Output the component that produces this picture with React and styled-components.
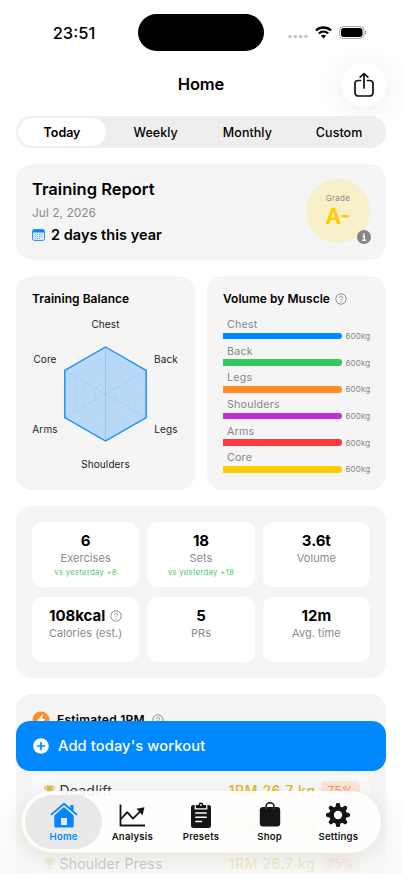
import React from 'react';
import styled, { createGlobalStyle } from 'styled-components';

const GlobalStyle = createGlobalStyle`
  * {
    box-sizing: border-box;
  }

  body {
    margin: 0;
    background: #fff;
    color: #000;
    font-family: Inter, "Liberation Sans", sans-serif;
  }
`;

const Screen = styled.div`
  position: relative;
  width: 402px;
  height: 874px;
  overflow: hidden;
  background: #fff;
`;

const StatusBar = styled.div`
  display: grid;
  grid-template-columns: 138px 126px 138px;
  align-items: center;
  height: 37px;
  margin-top: 14px;
`;

const Clock = styled.div`
  padding-left: 10px;
  text-align: center;
  font-size: 16.5px;
  font-weight: 550;
`;

const Island = styled.div`
  height: 37px;
  border-radius: 19px;
  background: #000;
`;

const StatusIcons = styled.div`
  display: flex;
  align-items: center;
  gap: 7px;
  padding-left: 24px;
`;

const NavBar = styled.div`
  display: grid;
  grid-template-columns: 1fr auto 1fr;
  align-items: center;
  height: 44px;
  margin-top: 11.5px;
  padding: 0 16px;
`;

const NavTitle = styled.h1`
  grid-column: 2;
  margin: 0;
  padding-bottom: 1px;
  font-size: 16.5px;
  font-weight: 600;
  letter-spacing: -0.1px;
`;

const ShareButton = styled.button`
  display: flex;
  align-items: center;
  justify-content: center;
  justify-self: end;
  width: 44px;
  height: 44px;
  padding: 0;
  border: 0;
  border-radius: 50%;
  background: #fff;
  box-shadow: 0 3px 30px rgba(0, 0, 0, 0.08);
`;

const Content = styled.main`
  display: flex;
  flex-direction: column;
  gap: 16px;
  padding: 9.5px 16px 0;
`;

const Segments = styled.div`
  display: grid;
  grid-template-columns: repeat(4, 1fr);
  height: 32px;
  padding: 2px 1px 2px 2px;
  border-radius: 16px;
  background: #eee;
`;

const Segment = styled.div`
  display: flex;
  align-items: center;
  justify-content: center;
  width: ${({ $active }) => ($active ? '88px' : 'auto')};
  border-radius: 14px;
  background: ${({ $active }) => ($active ? '#fff' : 'transparent')};
  font-size: 12.5px;
  font-weight: ${({ $active }) => ($active ? 600 : 500)};
  letter-spacing: ${({ $active }) => ($active ? '-0.05px' : '0.05px')};
`;

const Card = styled.section`
  height: ${({ $height }) => $height}px;
  padding: 16px;
  border-radius: 16px;
  background: #f5f5f5;
`;

const ReportCard = styled(Card)`
  display: flex;
  justify-content: space-between;
  padding-top: 15px;
`;

const ReportTitle = styled.h2`
  margin: 0;
  font-size: 16.5px;
  font-weight: 600;
  line-height: 20px;
`;

const ReportDate = styled.div`
  margin-top: 6px;
  color: #8a8a8e;
  font-size: 12px;
  line-height: 16px;
`;

const Streak = styled.div`
  display: flex;
  align-items: center;
  gap: 6px;
  margin-top: 4px;
  font-size: 14.5px;
  font-weight: 600;
  line-height: 19px;
  letter-spacing: 0.02px;
`;

const Grade = styled.div`
  position: relative;
  display: flex;
  flex-direction: column;
  align-items: center;
  width: 64px;
  height: 64px;
  padding-top: 14px;
  border-radius: 50%;
  background: #f8f0c9;
`;

const GradeLabel = styled.div`
  color: #8a8a80;
  font-size: 8px;
  line-height: 10px;
  letter-spacing: 0.3px;
`;

const GradeValue = styled.div`
  color: #fc0;
  font-size: 21px;
  font-weight: 700;
  line-height: 27px;
`;

const InfoBadge = styled.svg`
  position: absolute;
  right: -0.5px;
  bottom: -1px;
`;

const ChartRow = styled.div`
  display: grid;
  grid-template-columns: repeat(2, minmax(0, 1fr));
  gap: 12px;
`;

const CardTitle = styled.h3`
  display: flex;
  align-items: center;
  gap: 5px;
  margin: 0;
  font-size: 12px;
  font-weight: 600;
  line-height: 14px;
  letter-spacing: 0.04px;
  white-space: nowrap;
`;

const RadarChart = styled.svg`
  display: block;
  margin: 10px auto 0;

  text {
    fill: #222;
    font-size: 10px;
    letter-spacing: 0.1px;
    text-anchor: middle;
  }
`;

const MuscleList = styled.div`
  margin-top: 12px;
`;

const Muscle = styled.div`
  height: 26.65px;
`;

const MuscleName = styled.div`
  padding-left: 4px;
  color: #868686;
  font-size: 10.7px;
  line-height: 14.6px;
  letter-spacing: 0.2px;
`;

const MuscleBar = styled.div`
  display: flex;
  align-items: center;
  gap: 4px;
  height: 7px;
  color: #868686;
  font-size: 8px;
  letter-spacing: 0.15px;

  &::before {
    content: '';
    flex: none;
    width: 118.5px;
    height: 6.5px;
    border-radius: 0 3px 3px 0;
    background: ${({ $color }) => $color};
  }
`;

const StatsCard = styled(Card)`
  display: grid;
  grid-template-columns: repeat(3, minmax(0, 1fr));
  grid-auto-rows: 65px;
  gap: 10px 8px;
`;

const Tile = styled.div`
  display: flex;
  flex-direction: column;
  align-items: center;
  padding-top: 10px;
  border-radius: 10px;
  background: #fff;
`;

const TileValue = styled.div`
  display: flex;
  align-items: center;
  gap: 5px;
  font-size: 15px;
  font-weight: 700;
  line-height: 18px;
  letter-spacing: -0.05px;
`;

const TileLabel = styled.div`
  color: #8a8a8e;
  font-size: 11px;
  line-height: 17px;
  letter-spacing: 0.05px;
`;

const TileChange = styled.div`
  color: #48c969;
  font-size: 7.6px;
  line-height: 11px;
  letter-spacing: 0.35px;
`;

const RecordTitle = styled(CardTitle)`
  height: 18px;
  padding-top: 1px;
  gap: 7px;
  letter-spacing: 0.25px;
`;

const RecordList = styled.div`
  margin-top: 47px;
`;

const RecordRow = styled.div`
  display: grid;
  grid-template-columns: 10px 1fr auto 39px;
  align-items: center;
  gap: 5.5px;
  height: 31px;
  margin-bottom: 5.5px;
  padding: 0 10px 0 12px;
  border-radius: 8px;
  background: #fafafa;
  color: #222;
  font-size: 14px;
  letter-spacing: 0.2px;
`;

const RecordWeight = styled.span`
  color: #e3b112;
  font-weight: 550;
  letter-spacing: 0.6px;
`;

const Percent = styled.span`
  padding: 2px 0;
  border-radius: 5px;
  background: #fce5d7;
  color: #ef8d53;
  font-size: 12px;
  line-height: 15px;
  text-align: center;
`;

const BottomFade = styled.div`
  position: absolute;
  left: 0;
  right: 0;
  bottom: 0;
  height: 104px;
  background: linear-gradient(rgba(255, 255, 255, 0) 0%, rgba(253, 253, 253, 0.15) 25%, rgba(248, 248, 247, 0.78) 85%);
`;

const AddButton = styled.button`
  position: absolute;
  left: 16px;
  right: 16px;
  top: 721px;
  display: flex;
  align-items: center;
  gap: 9px;
  height: 50px;
  padding: 0 17px;
  border: 0;
  border-radius: 14px;
  background: #0088ff;
  color: #fff;
  font-family: inherit;
  font-size: 14.6px;
  font-weight: 550;
  letter-spacing: 0.15px;
`;

const TabBar = styled.nav`
  position: absolute;
  left: 21px;
  right: 21px;
  bottom: 21px;
  display: grid;
  grid-template-columns: repeat(5, 68.7px);
  justify-content: center;
  height: 62px;
  padding: 4px;
  border-radius: 31px;
  background: rgba(254, 254, 253, 0.92);
  box-shadow: inset 1px -1px 1px rgba(247, 244, 190, 0.6), 0 3px 22px rgba(0, 0, 0, 0.1);
`;

const Tab = styled.div`
  display: flex;
  flex-direction: column;
  align-items: center;
  margin: 0 -4px;
  padding-top: 7px;
  border-radius: 27px;
  background: ${({ $active }) => ($active ? '#e9e9e9' : 'transparent')};
  color: ${({ $active }) => ($active ? '#0088ff' : '#151515')};
  font-size: 9.6px;
  font-weight: 600;
  line-height: 12px;
  letter-spacing: 0.2px;

  svg {
    margin-bottom: 3px;
  }
`;

const SignalIcon = () => (
  <svg width="20" height="13" viewBox="0 0 20 13" fill="#c4c4c4">
    {[2, 7.3, 12.7, 18].map((x) => <circle key={x} cx={x} cy="10.5" r="1.8" />)}
  </svg>
);

const WifiIcon = () => (
  <svg width="17" height="13" viewBox="0 0 17 13" fill="none" stroke="#000" strokeWidth="2.3">
    <path d="M1 4.500c4.200-4 10.800-4 15 0" />
    <path d="M3.800 7.500c2.700-2.500 6.700-2.500 9.400 0" />
    <path d="M5.900 9.600c1.500-1.300 3.700-1.300 5.200 0L8.500 12.400z" fill="#000" stroke="none" />
  </svg>
);

const BatteryIcon = () => (
  <svg width="28" height="13" viewBox="0 0 28 13">
    <rect x=".5" y=".5" width="24.5" height="12" rx="4" fill="none" stroke="#a5a5a5" />
    <rect x="2" y="2" width="21.5" height="9" rx="2.700" />
    <path d="M26 4.500c1.800.7 1.800 3.300 0 4z" fill="#a5a5a5" />
  </svg>
);

const ShareIcon = () => (
  <svg width="22" height="26" viewBox="0 0 22 26" fill="none" stroke="#111" strokeWidth="1.700" strokeLinecap="round" strokeLinejoin="round">
    <path d="M7.500 8.500H5A3 3 0 0 0 2 11.500v9.200a3.300 3.300 0 0 0 3.300 3.300h11.400a3.300 3.300 0 0 0 3.300-3.300v-9.200a3 3 0 0 0-3-3h-2.500" />
    <path d="M11 16V1.500M7.200 5.200 11 1.500l3.800 3.700" />
  </svg>
);

const CalendarIcon = () => (
  <svg width="13" height="12" viewBox="0 0 13 12">
    <rect x=".5" y=".5" width="12" height="11" rx="2" fill="#d9ecff" stroke="#2693ff" />
    <path d="M.5 3.500v-1a2 2 0 0 1 2-2h8a2 2 0 0 1 2 2v1z" fill="#0a84ff" />
    <path d="M3 5.500h7M3 7.500h7M3 9.500h5" stroke="#72b8ff" strokeDasharray="1.200 .8" />
  </svg>
);

const HelpIcon = () => (
  <svg width="12" height="12" viewBox="0 0 12 12" fill="none" stroke="#858585" strokeWidth=".9">
    <circle cx="6" cy="6" r="5.200" />
    <path d="M4.500 4.900c0-2.300 3.200-2.200 3.100-.3C7.600 5.700 6 5.800 6 7.100M6 8.200v1" />
  </svg>
);

const BoltIcon = () => (
  <svg width="18" height="18" viewBox="0 0 18 18">
    <circle cx="9" cy="9" r="8.500" fill="#ff8d28" />
    <path d="M11.200 3 4.800 9.700h3.600L7 15l6.300-7H9.700z" fill="#fff" />
  </svg>
);

const PlusIcon = () => (
  <svg width="16" height="16" viewBox="0 0 16 16">
    <circle cx="8" cy="8" r="7.800" fill="#fff" />
    <path d="M8 4.500v7M4.500 8h7" stroke="#0088ff" strokeWidth="1.700" strokeLinecap="round" />
  </svg>
);

const TrophyIcon = () => (
  <svg width="11" height="12" viewBox="0 0 11 12" fill="#dcb63e">
    <path d="M2.500.5h6v3c0 2-1 3.500-2.300 4v2.200h2V11H2.800V9.700h2V7.500C3.500 7 2.500 5.500 2.500 3.500z" />
    <path d="M2.500 1.800H.6c0 2 .8 3.200 2.400 3.200M8.500 1.800h1.900c0 2-.8 3.200-2.400 3.200" fill="none" stroke="#dcb63e" />
  </svg>
);

const HomeIcon = () => (
  <svg width="28" height="26" viewBox="0 0 28 26" fill="currentColor">
    <path d="M1.500 12.400 14 1.700l12.500 10.700" fill="none" stroke="currentColor" strokeWidth="1.900" strokeLinecap="round" />
    <path d="M20.300 3h3.200v7.200l-3.200-2.700z" />
    <path d="M4.300 13.400 14 5.100l9.700 8.300V24a1.600 1.600 0 0 1-1.600 1.600H5.900A1.600 1.600 0 0 1 4.300 24z" />
    <path d="M11 16h6v7h-6z" fill="#e9e9e9" />
  </svg>
);

const AnalysisIcon = () => (
  <svg width="26" height="26" viewBox="0 0 26 26" fill="none" stroke="currentColor" strokeWidth="1.800">
    <path d="M1.500 2.500v21H26" />
    <path d="M2 17 8.200 10.200l5.800 6.500 8-8" strokeLinejoin="round" />
    <path d="m17.500 6.700 8-1.500-2 8z" fill="currentColor" stroke="none" />
  </svg>
);

const PresetsIcon = () => (
  <svg width="22" height="26" viewBox="0 0 22 26" fill="currentColor">
    <path d="M3.500 3h15A2.500 2.500 0 0 1 21 5.500v18a2.500 2.500 0 0 1-2.500 2.500h-15A2.500 2.500 0 0 1 1 23.500v-18A2.500 2.500 0 0 1 3.500 3z" />
    <path d="M5.200 2.500v4.300h11.600V2.500" fill="none" stroke="#fff" strokeWidth="1.200" />
    <path d="M6.300 5.800V4.200q0-1.200 1.700-1.200h.6a2.400 2.400 0 0 1 4.800 0h.6q1.700 0 1.700 1.200v1.600z" />
    <circle cx="11" cy="2.900" r=".9" fill="#fff" />
    <path d="M5.800 11h10.400M5.800 15.300h10.400M5.800 19.600h5.700" stroke="#fff" strokeWidth="1.500" strokeLinecap="round" />
  </svg>
);

const ShopIcon = () => (
  <svg width="22" height="26" viewBox="0 0 22 26" fill="currentColor">
    <rect x=".8" y="5" width="20.400" height="19.500" rx="3.200" />
    <path d="M7 7V4.700a4 4 0 0 1 8 0V7" fill="none" stroke="currentColor" strokeWidth="1.600" />
    <path d="M7 5v2.500M15 5v2.500" stroke="#777" strokeWidth=".7" />
  </svg>
);

const SettingsIcon = () => (
  <svg width="26" height="26" viewBox="0 0 26 26" fill="currentColor">
    {[0, 45, 90, 135, 180, 225, 270, 315].map((angle) => (
      <path key={angle} d="M10.300 6 11 2.200q.2-1.200 1.200-1.200h1.600q1 0 1.200 1.200l.7 3.800z" transform={`rotate(${angle} 13 13)`} />
    ))}
    <circle cx="13" cy="13" r="6.500" fill="none" stroke="currentColor" strokeWidth="4.600" />
  </svg>
);

const MUSCLES = [
  { name: 'Chest', color: '#0088ff' },
  { name: 'Back', color: '#34c759' },
  { name: 'Legs', color: '#ff8d28' },
  { name: 'Shoulders', color: '#c32fdb' },
  { name: 'Arms', color: '#ff383c' },
  { name: 'Core', color: '#ffcc00' },
];

const STATS = [
  { value: '6', label: 'Exercises', change: 'vs yesterday +6' },
  { value: '18', label: 'Sets', change: 'vs yesterday +18' },
  { value: '3.6t', label: 'Volume' },
  { value: '108kcal', label: 'Calories (est.)', help: true },
  { value: '5', label: 'PRs' },
  { value: '12m', label: 'Avg. time' },
];

const RECORDS = ['Deadlift', '', 'Shoulder Press'];

const TABS = [
  { name: 'Home', Icon: HomeIcon },
  { name: 'Analysis', Icon: AnalysisIcon },
  { name: 'Presets', Icon: PresetsIcon },
  { name: 'Shop', Icon: ShopIcon },
  { name: 'Settings', Icon: SettingsIcon },
];

const hexagon = (r) => [0, 60, 120, 180, 240, 300]
  .map((deg) => {
    const a = (deg * Math.PI) / 180;
    return `${73.5 + r * Math.sin(a)},${78 - r * Math.cos(a)}`;
  })
  .join(' ');

const Radar = () => (
  <RadarChart width="147" height="156" viewBox="0 0 147 156">
    <g fill="none" stroke="#c9cdd2" strokeWidth=".7">
      {[12, 24, 35].map((r) => <polygon key={r} points={hexagon(r)} strokeOpacity=".4" strokeDasharray="3 2" />)}
      <path d="M73.500 31v94" />
      <path d="M32.800 54.500l81.400 47M114.200 54.500l-81.400 47" strokeOpacity=".6" />
    </g>
    <polygon points={hexagon(47)} fill="#0088ff" fillOpacity=".25" stroke="#168cf7" strokeWidth="1.400" />
    <text x="73.500" y="12.300">Chest</text>
    <text x="134" y="47.300">Back</text>
    <text x="134" y="116.700">Legs</text>
    <text x="73.500" y="151.600">Shoulders</text>
    <text x="13" y="116.700">Arms</text>
    <text x="13" y="47.300">Core</text>
  </RadarChart>
);

const App = () => (
  <Screen>
    <GlobalStyle />
    <StatusBar>
      <Clock>23:51</Clock>
      <Island />
      <StatusIcons>
        <SignalIcon />
        <WifiIcon />
        <BatteryIcon />
      </StatusIcons>
    </StatusBar>
    <NavBar>
      <NavTitle>Home</NavTitle>
      <ShareButton aria-label="Share"><ShareIcon /></ShareButton>
    </NavBar>
    <Content>
      <Segments>
        {['Today', 'Weekly', 'Monthly', 'Custom'].map((name) => (
          <Segment key={name} $active={name === 'Today'}>{name}</Segment>
        ))}
      </Segments>
      <ReportCard $height={96}>
        <div>
          <ReportTitle>Training Report</ReportTitle>
          <ReportDate>Jul 2, 2026</ReportDate>
          <Streak><CalendarIcon />2 days this year</Streak>
        </div>
        <Grade>
          <GradeLabel>Grade</GradeLabel>
          <GradeValue>A-</GradeValue>
          <InfoBadge width="14" height="14" viewBox="0 0 14 14">
            <circle cx="7" cy="7" r="7" fill="#868686" />
            <path d="M5.500 6h1.800v4.200M5.300 10.300h3.800M7 3v1.600" stroke="#fff" strokeWidth="1.400" fill="none" />
          </InfoBadge>
        </Grade>
      </ReportCard>
      <ChartRow>
        <Card $height={214}>
          <CardTitle>Training Balance</CardTitle>
          <Radar />
        </Card>
        <Card $height={214}>
          <CardTitle>Volume by Muscle <HelpIcon /></CardTitle>
          <MuscleList>
            {MUSCLES.map(({ name, color }) => (
              <Muscle key={name}>
                <MuscleName>{name}</MuscleName>
                <MuscleBar $color={color}>600kg</MuscleBar>
              </Muscle>
            ))}
          </MuscleList>
        </Card>
      </ChartRow>
      <StatsCard $height={172}>
        {STATS.map(({ value, label, change, help }) => (
          <Tile key={label}>
            <TileValue>{value}{help && <HelpIcon />}</TileValue>
            <TileLabel>{label}</TileLabel>
            {change && <TileChange>{change}</TileChange>}
          </Tile>
        ))}
      </StatsCard>
      <Card $height={260}>
        <RecordTitle><BoltIcon />Estimated 1RM <HelpIcon /></RecordTitle>
        <RecordList>
          {RECORDS.map((name) => (
            <RecordRow key={name}>
              <TrophyIcon />
              <span>{name}</span>
              <RecordWeight>1RM 26.7 kg</RecordWeight>
              <Percent>75%</Percent>
            </RecordRow>
          ))}
        </RecordList>
      </Card>
    </Content>
    <BottomFade />
    <AddButton><PlusIcon />Add today's workout</AddButton>
    <TabBar>
      {TABS.map(({ name, Icon }) => (
        <Tab key={name} $active={name === 'Home'}>
          <Icon />
          {name}
        </Tab>
      ))}
    </TabBar>
  </Screen>
);

export default App;
